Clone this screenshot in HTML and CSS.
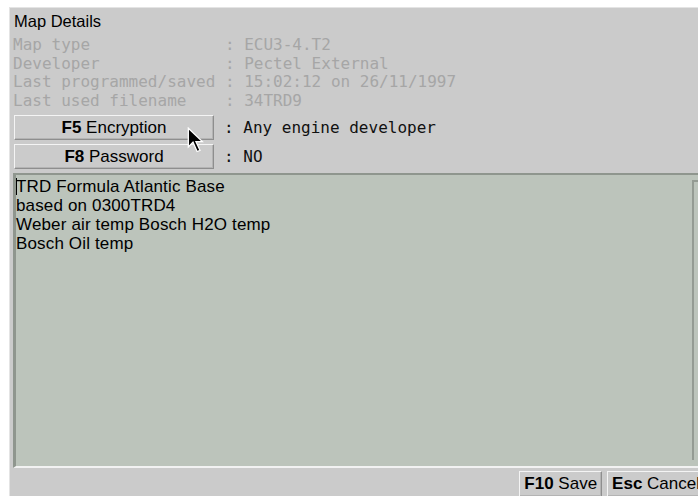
FILE: index.html
```html
<!DOCTYPE html>
<html>
<head>
<meta charset="utf-8">
<link rel="stylesheet" href="styles.css">
</head>
<body>
<div class="window">
  <div class="title">Map Details</div>
  <div class="info">
    <div class="row">Map type              : ECU3-4.T2</div>
    <div class="row">Developer             : Pectel External</div>
    <div class="row">Last programmed/saved : 15:02:12 on 26/11/1997</div>
    <div class="row">Last used filename    : 34TRD9</div>
  </div>
  <div class="actions">
    <div class="action">
      <button class="btn wide"><b>F5</b> Encryption</button>
      <span class="value">: Any engine developer</span>
    </div>
    <div class="action">
      <button class="btn wide"><b>F8</b> Password</button>
      <span class="value">: NO</span>
    </div>
  </div>
  <div class="notes">
    <div class="notes-text"><span class="caret"></span>TRD Formula Atlantic Base<br>based on 0300TRD4<br>Weber air temp Bosch H2O temp<br>Bosch Oil temp</div>
    <div class="scroll"></div>
  </div>
  <div class="footer">
    <button class="btn"><b>F10</b> Save</button>
    <button class="btn"><b>Esc</b> Cancel</button>
  </div>
  <svg class="cursor" width="19" height="28" viewBox="0 0 16 24">
    <path d="M1 1 L1 17 L5 13 L8.5 21 L11 20 L7.5 12.5 L13 12.5 Z" fill="#000" stroke="#fff" stroke-width="1.1" stroke-linejoin="miter"/>
  </svg>
</div>
</body>
</html>
```

FILE: styles.css
```css
html, body {
  margin: 0;
  padding: 0;
  background: #ffffff;
  overflow: hidden;
  width: 698px;
  height: 496px;
}

.window {
  position: relative;
  margin: 7px 0 0 9px;
  width: 700px;
  height: 489px;
  background: #cbcbcb;
  border-left: 1px solid #e4e4e4;
  border-top: 1px solid #e4e4e4;
  box-sizing: border-box;
  padding-left: 3px;
  display: flex;
  flex-direction: column;
  font-family: "Liberation Sans", Arial, sans-serif;
  font-size: 16.5px;
  color: #000;
}

.title {
  flex: none;
  height: 28px;
  line-height: 26px;
  padding-left: 1px;
}

.info {
  flex: none;
  font-family: "DejaVu Sans Mono", "Liberation Mono", monospace;
  font-size: 16px;
  color: #a6a6a6;
  padding-left: 0;
}

.row {
  white-space: pre;
  height: 18.5px;
  line-height: 18.5px;
}

.actions {
  flex: none;
  margin-top: 5px;
  display: flex;
  flex-direction: column;
  gap: 4px;
}

.action {
  display: flex;
  align-items: center;
}

.value {
  font-family: "DejaVu Sans Mono", "Liberation Mono", monospace;
  font-size: 16px;
  white-space: pre;
  margin-left: 10px;
  color: #111;
}

.btn {
  font-family: "Liberation Sans", Arial, sans-serif;
  font-size: 17px;
  color: #000;
  background: #cbcbcb;
  border: 1px solid;
  border-color: #f4f4f4 #8e8e8e #8e8e8e #f4f4f4;
  box-shadow: inset -1px -1px 0 #b4b4b4;
  height: 25px;
  padding: 0 6px;
  margin: 0;
  white-space: nowrap;
}

.wide {
  width: 200px;
  margin-left: 1px;
}

.notes {
  flex: none;
  margin-top: 4px;
  height: 295px;
  display: flex;
  background: #bcc4bb;
  border-top: 2px solid #8f968e;
  border-left: 3px solid #8f968e;
  border-bottom: 2px solid #f2f2f2;
  box-sizing: border-box;
}

.notes-text {
  flex: 1;
  padding: 2px 0 0 0;
  line-height: 19px;
  font-size: 17px;
  letter-spacing: 0.15px;
}

.caret {
  display: inline-block;
  width: 1px;
  height: 17px;
  background: #000;
  vertical-align: -3px;
  margin-right: -1px;
}

.scroll {
  margin-top: 5px;
  margin-bottom: 6px;
  width: 14px;
  margin-right: 1px;
  border-left: 2px solid #949b93;
  border-top: 2px solid #949b93;
  background: #bcc4bb;
}

.footer {
  flex: none;
  display: flex;
  justify-content: flex-end;
  gap: 5px;
  padding-top: 3px;
  margin-right: 4px;
}

.footer .btn {
  padding: 0 4px;
  height: 26px;
}

.cursor {
  position: absolute;
  left: 177px;
  top: 119px;
}
```
